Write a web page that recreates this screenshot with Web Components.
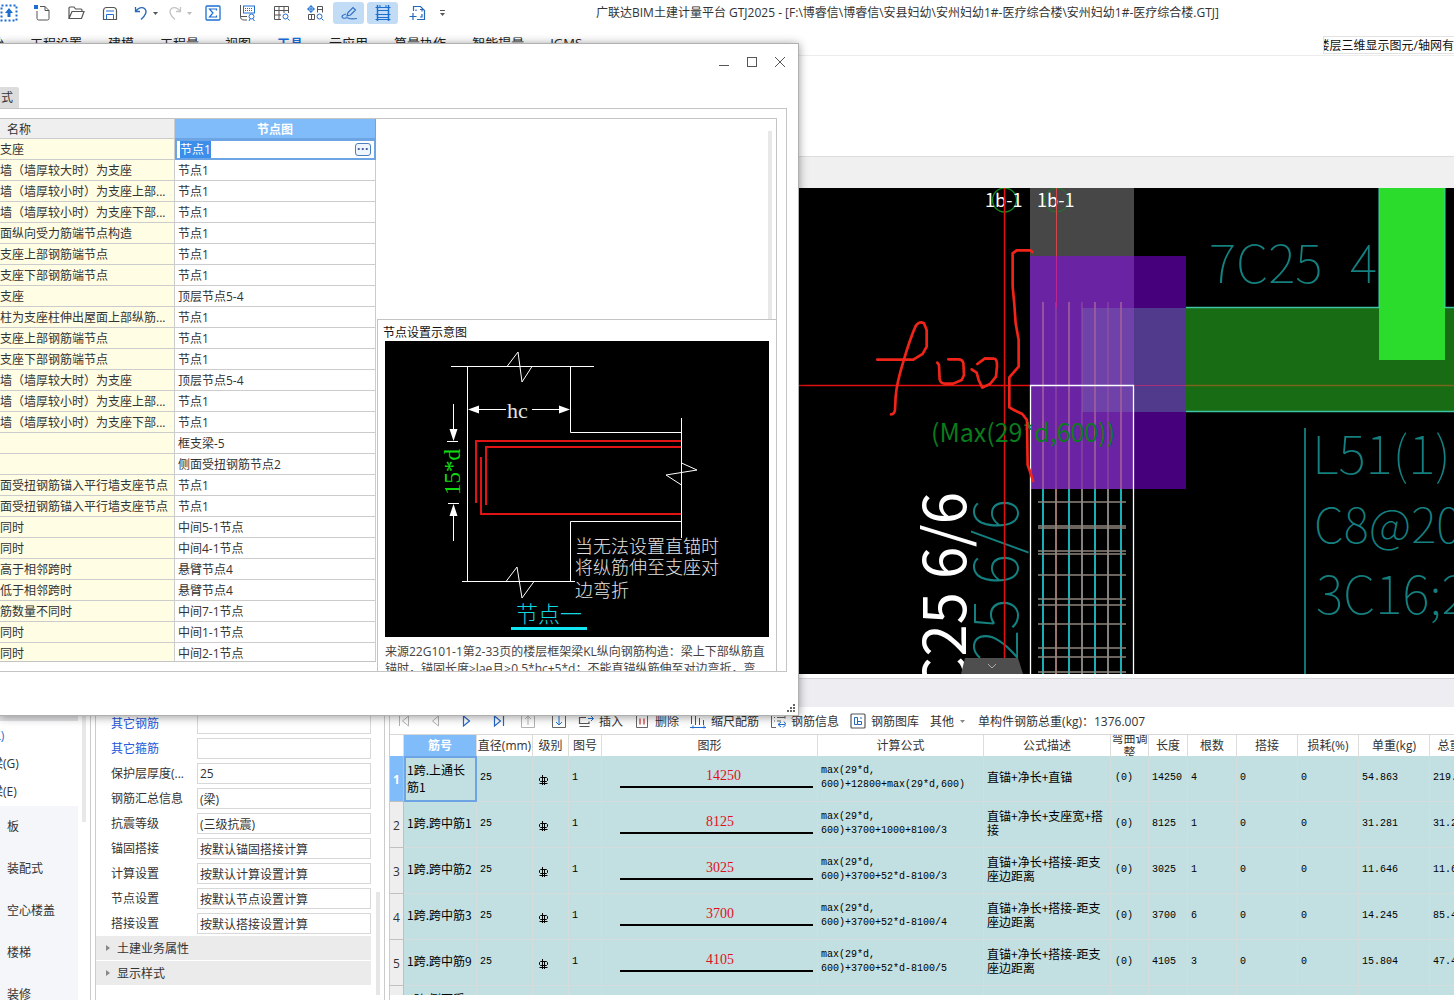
<!DOCTYPE html>
<html lang="zh-CN">
<head>
<meta charset="utf-8">
<title>广联达BIM土建计量平台 GTJ2025</title>
<style>
  html, body {
    height: 100%;
    margin: 0;
    overflow: hidden;
  }
  body {
    background: #fff;
    color: #333;
    font: 12px/17px "Open Sans", "Noto Sans CJK SC", sans-serif;
  }
</style>
</head>
<body>
<app-shell>
  <title-bar slot="top" text="广联达BIM土建计量平台 GTJ2025 - [F:\博睿信\博睿信\安县妇幼\安州妇幼1#-医疗综合楼\安州妇幼1#-医疗综合楼.GTJ]"></title-bar>
  <menu-bar slot="top" active="工具" notice="楼层三维显示图元/轴网有"></menu-bar>
  <cad-view slot="view"></cad-view>
  <component-tree slot="bottom"></component-tree>
  <property-panel slot="bottom"></property-panel>
  <rebar-editor slot="bottom"></rebar-editor>
  <node-dialog slot="window"></node-dialog>
</app-shell>

<script>
const ICONS = {
  upload: '<rect x="1.5" y="1.5" width="15" height="15" stroke="#1c6fd0" stroke-width="2" stroke-dasharray="2 2"/><path d="M9 4l4 5h-2.500v4h-3V9H5z" fill="#1c6fd0"/>',
  fresh: '<path d="M7 2.500h5l4 4v8a1.500 1.500 0 0 1-1.500 1.500h-9A1.500 1.500 0 0 1 4 14.500V7M12 2.500V6.500h4" stroke="#555"/><path d="M1 1h2v2h2v2H3V3H1zM3 1h2v2H3zM1 3h2v2H1z" fill="#1c6fd0"/>',
  open: '<path d="M2 14.500V4a1 1 0 0 1 1-1h4l1.500 2H14a1 1 0 0 1 1 1v1.500M2 14.500L5 7.500h12L14.500 14.500z" stroke="#555" stroke-width="1.200"/>',
  save: '<path d="M2.500 15.500v-9a3 3 0 0 1 3-3h7a3 3 0 0 1 3 3v9z" stroke="#555" stroke-width="1.200"/><path d="M5.500 15.500v-5h7v5M5 7h8" stroke="#1c6fd0"/>',
  undo: '<path d="M2.500 3v4.500H7M2.500 7.500C5 4 9 2.500 11.500 4.500c3 2.500 1.500 6.500-3.500 11" stroke="#2468b8" stroke-width="1.300"/>',
  redo: '<path d="M13.500 3v4.500H9M13.500 7.500C11 4 7 2.500 4.500 4.500c-3 2.500-1.500 6.500 3.500 11" stroke="#c4c4c4" stroke-width="1.300"/>',
  sum: '<rect x="2" y="2" width="14" height="14" rx="1" stroke="#1c6fd0" stroke-width="1.300"/><path d="M12.500 6.500V5h-7L9 9l-3.500 4h7v-1.500" stroke="#1c6fd0" stroke-width="1.200"/>',
  query: '<path d="M2.500 1v11c0 3 1 4 4 4H9M3 12.500h6" stroke="#555"/><rect x="5.500" y="2" width="11" height="7" stroke="#1c6fd0"/><path d="M7 4.500h8M7 6.500h8" stroke="#1c6fd0" stroke-dasharray="1 1"/><circle cx="13.500" cy="12.500" r="2.500" stroke="#1c6fd0"/><path d="M12 15l-1 2M15 15l1.500 2" stroke="#1c6fd0"/>',
  sheet: '<path d="M9 15.500H2.500v-13h14V9M2.500 6.500h14M2.500 11H9M7 2.500v13M12 2.500V9" stroke="#555"/><circle cx="13.500" cy="12.500" r="2.500" stroke="#1c6fd0"/><path d="M15.500 14.500l2 2" stroke="#1c6fd0"/>',
  parts: '<circle cx="5" cy="5" r="2.500" stroke="#1c6fd0"/><path d="M1 5h8M5 1v8" stroke="#1c6fd0"/><path d="M11.500 8.500v-6h5v6M11.500 5.500h5M2.500 10.500h6v5h-6zM5.500 10.500v5" stroke="#555"/><circle cx="13.500" cy="12.500" r="2.500" stroke="#1c6fd0"/><path d="M15.500 14.500l2 2" stroke="#1c6fd0"/>',
  pen: '<path d="M7 12l1-3.500 5-5 2.500 2.500-5 5zM6 10c-4 1-5 2.500-3 4 2 1 3-1 5 0s6 1 9 .5" stroke="#2f6fc4" stroke-width="1.200"/>',
  ladder: '<path d="M3.500 1v16M14.500 1v16" stroke="#1c6fd0" stroke-width="1.500"/><path d="M1.500 3.500h15M3.500 6.500h11M1.500 10.500h15M3.500 13.500h11M1.500 15.500h15M6 1v3M12 1v3" stroke="#1c6fd0"/>',
  frame: '<path d="M5.500 7V2.500h7l4 4v9H9M12 5.500h2v2M8 5.500V7M14 10v3h-2" stroke="#2468b8" stroke-width="1.200"/><path d="M5 9v7M1.500 12.500h7" stroke="#2468b8" stroke-width="1.200"/>',
  first: '<path d="M4.500 4v10M13.500 4v10L7.500 9z" stroke="#b4b4b4"/>',
  prev: '<path d="M12.500 4v10L6.500 9z" stroke="#b4b4b4"/>',
  next: '<path d="M6.500 4v10L12.500 9z" stroke="#2468c8" stroke-width="1.200"/>',
  last: '<path d="M15.500 4v10M6.500 4v10l6-5z" stroke="#2468c8" stroke-width="1.200"/>',
  up: '<path d="M6 2.500H2.500v13h13v-13H12M9 13V4M6 7l3-3 3 3" stroke="#b4b4b4"/>',
  down: '<path d="M6 2.500H2.500v13h13v-13H12" stroke="#666"/><path d="M9 3v10M6 10l3 3 3-3" stroke="#1c6fd0"/>',
  insert: '<path d="M9 5.500H2.500v6H12V9.500M2.500 14.500h10" stroke="#555" stroke-width="1.200"/><path d="M11 6.500h5M14 4l2.500 2.500L14 9" stroke="#1c6fd0"/>',
  remove: '<path d="M2 3.500h14M3.500 3.500v12h11v-12" stroke="#666"/><path d="M7 6.500v6M11 6.500v6" stroke="#d04040" stroke-width="1.300"/>',
  scale: '<path d="M2.500 3v9M6.500 4v9M10.500 6v7M14.500 8v5" stroke="#555"/><path d="M1 15.500h16M4 13.500v3M15 13.500v3" stroke="#1c6fd0"/>',
  info: '<path d="M5 2.500H2.500v13H7M5 5.500h1M8 5.500h8M5 9h1M8 9h4M14 2.500h2v4" stroke="#666"/><path d="M9 12.500h7M12 10l-3 2.500 3 2.500M15 9.500l2 3-3 3" stroke="#1c6fd0"/>',
  library: '<rect x="2" y="2" width="14" height="14" rx="1" stroke="#555" stroke-width="1.200"/><path d="M5.500 5.500h3v7h-3zM8.500 9.500h4v3h-4M11 6h2" stroke="#2468b8"/>',
};

// 18px icons use the full grid, 16px ones drop its outer pixel
function icon(name, size = 18) {
  const inset = (18 - size) / 2;
  return `<svg width="${size}" height="${size}" viewBox="${inset} ${inset} ${size} ${size}" fill="none">${ICONS[name]}</svg>`;
}

class AppShell extends HTMLElement {
  constructor() {
    super();
    this.attachShadow({ mode: "open" });
    this.shadowRoot.innerHTML = /*html*/ `
      <style>
        :host {
          display: flex;
          flex-direction: column;
          position: relative;
          height: 100vh;
          overflow: hidden;
        }
        .ribbon { flex: none; height: 100px; }
        .strip {
          flex: none;
          box-sizing: border-box;
          height: 32px;
          background: #f0f0f0;
          border-top: 1px solid #ddd;
        }
        .view {
          display: flex;
          flex: 1;
          min-height: 0;
        }
        .divider {
          flex: none;
          box-sizing: border-box;
          height: 29px;
          margin-top: 4px;
          background: #eeeef2;
          border-top: 1px solid #d4d4d8;
        }
        .bottom {
          display: flex;
          flex: none;
          height: 293px;
        }
      </style>
      <slot name="top"></slot>
      <div class="ribbon"></div>
      <div class="strip"></div>
      <div class="view"><slot name="view"></slot></div>
      <div class="divider"></div>
      <div class="bottom"><slot name="bottom"></slot></div>
      <slot name="window"></slot>
    `;
  }
}
customElements.define("app-shell", AppShell);

class TitleBar extends HTMLElement {
  constructor() {
    super();
    this.attachShadow({ mode: "open" });
  }

  connectedCallback() {
    this.shadowRoot.innerHTML = /*html*/ `
      <style>
        :host {
          display: flex;
          flex: none;
          height: 26px;
          white-space: nowrap;
        }
        .tools {
          display: flex;
          flex: none;
          align-items: center;
          gap: 3px;
          width: 596px;
        }
        button {
          display: grid;
          flex: none;
          place-content: center;
          width: 31px;
          height: 22px;
          padding: 0;
          border: 0;
          border-radius: 3px;
          background: none;
        }
        button.first { width: 24px; margin: 0 2px 0 -3px; }
        button.undo { margin-left: -2px; }
        button.caret { width: 9px; margin: 0 -3px 0 -9px; }
        button.caret.wide { margin-right: 0; }
        button.caret.more { margin: 0 0 0 3px; }
        button.on { background: #c2dcf5; }
        svg { display: block; }
        h1 {
          margin: 0;
          font-size: 12px;
          font-weight: normal;
          line-height: 26px;
        }
      </style>
      <div class="tools">
        <button class="first" aria-label="上传">${icon("upload")}</button>
        <button aria-label="新建">${icon("fresh")}</button>
        <button aria-label="打开">${icon("open")}</button>
        <button aria-label="保存">${icon("save")}</button>
        <button class="undo" aria-label="撤销">${icon("undo")}</button>
        <button class="caret" aria-label="撤销列表"><svg width="5" height="3"><path d="M0 0h5L2.500 3z" fill="#555"/></svg></button>
        <button aria-label="恢复">${icon("redo")}</button>
        <button class="caret wide" aria-label="恢复列表"><svg width="5" height="3"><path d="M0 0h5L2.500 3z" fill="#bbb"/></svg></button>
        <button aria-label="汇总计算">${icon("sum")}</button>
        <button aria-label="查看工程量">${icon("query")}</button>
        <button aria-label="查看报表">${icon("sheet")}</button>
        <button aria-label="查看构件">${icon("parts")}</button>
        <button class="on" aria-label="编辑钢筋">${icon("pen")}</button>
        <button class="on" aria-label="钢筋三维">${icon("ladder")}</button>
        <button aria-label="选择框">${icon("frame")}</button>
        <button class="caret more" aria-label="更多"><svg width="5" height="6"><path d="M0 .5h5" stroke="#555"/><path d="M0 3h5L2.500 6z" fill="#555"/></svg></button>
      </div>
      <h1></h1>
    `;
    this.shadowRoot.querySelector("h1").textContent = this.getAttribute("text");
  }
}
customElements.define("title-bar", TitleBar);

class MenuBar extends HTMLElement {
  items = ["始", "工程设置", "建模", "工程量", "视图", "工具", "云应用", "算量协作", "智能提量", "IGMS"];

  constructor() {
    super();
    this.attachShadow({ mode: "open" });
  }

  connectedCallback() {
    const active = this.getAttribute("active");
    this.shadowRoot.innerHTML = /*html*/ `
      <style>
        :host {
          display: flex;
          flex: none;
          justify-content: space-between;
          box-sizing: border-box;
          height: 30px;
          padding-top: 7px;
          border-bottom: 1px solid #ececec;
          overflow: hidden;
        }
        nav {
          display: flex;
          gap: 26px;
          margin-left: -9px;
        }
        a {
          color: #222;
          font-size: 13px;
          line-height: 20px;
          text-decoration: none;
          white-space: nowrap;
        }
        a.active { color: #1a6fe0; font-weight: bold; }
        .notice {
          display: flex;
          justify-content: flex-end;
          box-sizing: border-box;
          width: 131px;
          height: 18px;
          margin-top: 3px;
          border: 1px solid #e2e2e2;
          border-right: 0;
          color: #111;
          line-height: 17px;
          white-space: nowrap;
          overflow: hidden;
        }
      </style>
      <nav>${this.items.map((item) => `<a href="#"${item === active ? ' class="active"' : ""}>${item}</a>`).join("")}</nav>
      <div class="notice"><span>${this.getAttribute("notice")}</span></div>
    `;
  }
}
customElements.define("menu-bar", MenuBar);

class CadView extends HTMLElement {
  bars = [
    [1043, "#18b0b8"], [1056, "#9a7468"], [1069, "#18b0b8"], [1082, "#84807c"],
    [1095, "#18b0b8"], [1108, "#84807c"], [1121, "#18b0b8"],
  ];
  stirrups = [502, 526, 528, 551, 554, 575, 599, 605, 624, 648, 657, 672];

  constructor() {
    super();
    this.attachShadow({ mode: "open" });
  }

  connectedCallback() {
    const bars = this.bars.map(([x, color]) => `
      <path d="M${x} 489V674" stroke="${color}" stroke-width="2"/>
      <path d="M${x} 302V489" stroke="#a8629c" stroke-width="1.500" opacity="${color === "#18b0b8" ? 1 : 0.5}"/>`).join("");
    const stirrups = this.stirrups.map((y) => `<path d="M1038 ${y}H1126"/>`).join("");

    this.shadowRoot.innerHTML = /*html*/ `
      <style>
        :host {
          display: block;
          flex: 1;
          min-width: 0;
          background: #000;
          overflow: hidden;
        }
        svg { display: block; width: 100%; height: 100%; }
        text { font-family: "Noto Sans CJK SC", sans-serif; white-space: pre; }
        .cad {
          fill: #158080;
          font-size: 52px;
          font-weight: 100;
        }
        .cad.dense { font-size: 48px; }
        .cad.tall { font-size: 60px; }
        .axis { fill: #fff; font-size: 18px; }
      </style>
      <svg fill="none">
        <g transform="translate(0 -188)">
          <path d="M1186 308h2400v104H1186z" fill="#186c14"/>
          <path d="M1186 307.500H2400M1186 411.500H2400" stroke="#3cc4a4" stroke-width="1.500"/>
          <path d="M1379 188h66v172h-66z" fill="#2cdc2c"/>
          <path d="M1379 188V308M1445 188V308" stroke="#3cd4b4"/>

          <path d="M1030 188h104v68h-104z" fill="#474747"/>
          <path d="M1030 256h156v233h-156z" fill="#46007b"/>
          <path d="M1030 256h104v233h-104z" fill="#6a24a3"/>
          <path d="M1082 308h104v104h-104z" fill="#513a8b"/>
          <path d="M1082 308h52v104h-52z" fill="#6e42a9"/>

          <text class="cad" x="1209" y="283">7C25</text>
          <text class="cad" x="1350" y="283">4</text>
          <text class="cad" x="1312" y="474">L51(1)</text>
          <text class="cad dense" x="1314" y="543">C8@20</text>
          <text class="cad" x="1316" y="614">3C16;2</text>
          <path d="M1305 428V2000" stroke="#0f7474" stroke-width="2"/>
          <text class="cad tall" text-anchor="end" transform="translate(1018 499) rotate(-90)">25 6/6</text>

          ${bars}
          <g stroke="#8f857c" stroke-width="1.300">${stirrups}</g>

          <circle cx="1004.500" cy="200" r="12" stroke="#128a1c" stroke-width="1.300"/>
          <circle cx="1056.500" cy="200" r="12" stroke="#1e7a26"/>
          <text class="axis" x="985" y="207">1b-1</text>
          <text class="axis" x="1037" y="207">1b-1</text>
          <path d="M1004.500 188V674" stroke="#e01010" stroke-width="1.500"/>
          <path d="M1056.500 188V256" stroke="#d04848"/>
          <path d="M1056.500 256V308" stroke="#b82890"/>
          <path d="M798 385.500H1030" stroke="#e01010" stroke-width="1.500"/>
          <path d="M1134 385.500H1186" stroke="#a83078"/>
          <path d="M1186 385.500H2400" stroke="#78641a" stroke-width="1.500"/>
          <path d="M1030.500 674V385.500H1133.500V674" stroke="#fff" stroke-width="1.300"/>

          <text x="931" y="442" font-size="25" fill="#0a7c1c">(Max(29*d,600))</text>
          <text font-size="58" fill="#fff" text-anchor="end" transform="translate(966 492) rotate(-90)">C25 6/6</text>

          <g transform="translate(790 180) scale(.3333)" stroke="#f02418" stroke-width="8" stroke-linecap="round" stroke-linejoin="round">
            <path d="M727 216L722 211H680L668 220V320L673 372L677 430L686 480V560L658 592V682L672 690L697 702L711 720L713 855L722 880L729 903"/>
            <path d="M262 539H370L398 522L410 500V450L402 430Q390 422 378 436Q362 470 340 545Q320 610 317 650L315 690Q312 704 303 703"/>
            <path d="M442 548L447 555L449 598Q452 611 464 611H490L515 600L522 585L520 548Q516 538 506 538H475"/>
            <path d="M545 568L560 578L566 600L577 623L600 612L618 590L621 560Q622 536 612 536L585 535L562 552"/>
          </g>

          <path d="M961 674L965 658H1018L1023 674z" fill="#4e4e4e"/>
          <path d="M988 664l4 4 4-4" stroke="#aaa"/>
        </g>
      </svg>
    `;
  }
}
customElements.define("cad-view", CadView);

class ComponentTree extends HTMLElement {
  constructor() {
    super();
    this.attachShadow({ mode: "open" });
    this.shadowRoot.innerHTML = /*html*/ `
      <style>
        :host {
          display: flex;
          flex: none;
          gap: 4px;
          box-sizing: border-box;
          width: 91px;
          border-right: 1px solid #ccc;
          overflow: hidden;
        }
        .list { width: 78px; white-space: nowrap; }
        .head { height: 14px; background: #e4e4e8; }
        ul { margin: 0; padding: 0; list-style: none; }
        .types { padding-top: 1px; }
        .types li { line-height: 28px; }
        .types span { margin-left: -9px; }
        .types .active { color: #2a6fd0; }
        .groups { background: #f4f6f9; }
        .groups li { padding-left: 7px; line-height: 42px; }
        .thumb { width: 4px; height: 115px; background: #e8e8e8; }
      </style>
      <div class="list">
        <div class="head"></div>
        <ul class="types">
          <li class="active"><span>(L)</span></li>
          <li><span>梁(G)</span></li>
          <li><span>梁(E)</span></li>
        </ul>
        <ul class="groups">
          <li>板</li>
          <li>装配式</li>
          <li>空心楼盖</li>
          <li>楼梯</li>
          <li>装修</li>
        </ul>
      </div>
      <div class="thumb"></div>
    `;
  }
}
customElements.define("component-tree", ComponentTree);

class PropertyPanel extends HTMLElement {
  rows = [
    ["其它钢筋", "", true],
    ["其它箍筋", "", true],
    ["保护层厚度(...", "25"],
    ["钢筋汇总信息", "(梁)"],
    ["抗震等级", "(三级抗震)"],
    ["锚固搭接", "按默认锚固搭接计算"],
    ["计算设置", "按默认计算设置计算"],
    ["节点设置", "按默认节点设置计算"],
    ["搭接设置", "按默认搭接设置计算"],
  ];

  constructor() {
    super();
    this.attachShadow({ mode: "open" });
  }

  connectedCallback() {
    const rows = this.rows.map(([label, value, link], i) => `
      <label for="p${i}"${link ? ' class="link"' : ""}>${label}</label>
      <input id="p${i}" value="${value}">`).join("");

    this.shadowRoot.innerHTML = /*html*/ `
      <style>
        :host {
          display: flex;
          flex: none;
          gap: 5px;
          box-sizing: border-box;
          width: 290px;
          margin-left: 4px;
          border: 1px solid #ccc;
          border-width: 0 1px;
          overflow: hidden;
        }
        .body { flex: none; width: 275px; }
        .rows {
          display: grid;
          grid-template-columns: 86px 174px;
          gap: 4px 0;
          padding: 6px 0 2px 15px;
        }
        label { line-height: 21px; white-space: nowrap; }
        label.link { color: #2856d8; }
        input {
          box-sizing: border-box;
          height: 21px;
          padding: 0 2px;
          border: 1px solid #d8d8d8;
          background: #fff;
          color: #333;
          font: inherit;
        }
        button {
          display: flex;
          align-items: center;
          gap: 7px;
          width: 100%;
          height: 24px;
          margin-bottom: 1px;
          padding: 0 0 0 10px;
          border: 0;
          background: #ebebeb;
          color: #333;
          font: inherit;
        }
        .thumb {
          align-self: flex-end;
          width: 4px;
          height: 103px;
          margin-bottom: 5px;
          background: #e6e6e6;
        }
      </style>
      <div class="body">
        <div class="rows">${rows}</div>
        <button><svg width="4" height="6"><path d="M0 0l4 3-4 3z" fill="#888"/></svg>土建业务属性</button>
        <button><svg width="4" height="6"><path d="M0 0l4 3-4 3z" fill="#888"/></svg>显示样式</button>
      </div>
      <div class="thumb"></div>
    `;
  }
}
customElements.define("property-panel", PropertyPanel);

class RebarEditor extends HTMLElement {
  columns = [
    ["", 14], ["筋号", 73], ["直径(mm)", 56], ["级别", 36], ["图号", 33], ["图形", 216],
    ["计算公式", 166], ["公式描述", 127], ["弯曲调整", 38], ["长度", 39], ["根数", 49],
    ["搭接", 61], ["损耗(%)", 61], ["单重(kg)", 71], ["总重(kg)", 60],
  ];
  rows = [
    ["1跨.上通长筋1", "14250", "600)+12800+max(29*d,600)", "直锚+净长+直锚", "4", "54.863", "219.452"],
    ["1跨.跨中筋1", "8125", "600)+3700+1000+8100/3", "直锚+净长+支座宽+搭接", "1", "31.281", "31.281"],
    ["1跨.跨中筋2", "3025", "600)+3700+52*d-8100/3", "直锚+净长+搭接-距支座边距离", "1", "11.646", "11.646"],
    ["1跨.跨中筋3", "3700", "600)+3700+52*d-8100/4", "直锚+净长+搭接-距支座边距离", "6", "14.245", "85.47"],
    ["1跨.跨中筋9", "4105", "600)+3700+52*d-8100/5", "直锚+净长+搭接-距支座边距离", "3", "15.804", "47.412"],
  ];

  constructor() {
    super();
    this.attachShadow({ mode: "open" });
  }

  connectedCallback() {
    this.render();
  }

  renderRow([name, length, formula, note, count, unit, total], i) {
    return `
      <tr${i === 0 ? ' class="current"' : ""}>
        <th>${i + 1}</th>
        <td class="name">${name}</td>
        <td>25</td>
        <td><svg width="10" height="10" viewBox="0 0 10 10" fill="none" stroke="#000"><path d="M4.500 0v10M6.500 2v8M1.500 3.500l1-1h6l1 1v2l-1 1h-6l-1-1zM1.500 8.500h8"/></svg></td>
        <td>1</td>
        <td class="shape"><b>${length}</b></td>
        <td>max(29*d,<br>${formula}</td>
        <td class="note">${note}</td>
        <td>(0)</td>
        <td>${length}</td>
        <td>${count}</td>
        <td>0</td>
        <td>0</td>
        <td>${unit}</td>
        <td>${total}</td>
      </tr>`;
  }

  render() {
    this.shadowRoot.innerHTML = /*html*/ `
      <style>
        :host {
          display: flex;
          flex: 1;
          flex-direction: column;
          box-sizing: border-box;
          min-width: 0;
          margin-left: 4px;
          padding-bottom: 5px;
          border-left: 1px solid #ccc;
          overflow: hidden;
        }
        .tools {
          display: flex;
          flex: none;
          align-items: center;
          gap: 11px;
          box-sizing: border-box;
          height: 28px;
          padding: 1px 0 0 6px;
          border-bottom: 1px solid #d8d8d8;
          white-space: nowrap;
        }
        .steps { display: flex; gap: 15px; }
        button {
          display: flex;
          align-items: center;
          gap: 5px;
          padding: 0;
          border: 0;
          background: none;
          color: #333;
          font: inherit;
        }
        .scroll { flex: 1; min-height: 0; overflow: hidden; }
        table {
          width: 1100px;
          border-collapse: separate;
          border-spacing: 0;
          table-layout: fixed;
        }
        th, td {
          box-sizing: border-box;
          padding: 0 0 0 3px;
          border-right: 1px solid #d4dcdc;
          text-align: left;
        }
        thead th {
          padding: 0;
          border-color: #ddd;
          font-weight: normal;
          text-align: center;
        }
        thead div {
          display: flex;
          align-items: center;
          justify-content: center;
          height: 21px;
          line-height: 14px;
          overflow: hidden;
        }
        thead th:nth-child(2) { background: #80bbfa; color: #fff; font-weight: bold; }
        tbody tr { height: 46px; background: #c2dfe1; }
        tbody td {
          padding-bottom: 1px;
          border-bottom: 1px solid #d4dcdc;
          color: #000;
          font: 10px/14px "Liberation Mono", "Noto Sans CJK SC", monospace;
        }
        tbody th {
          padding: 2px 0 0 3px;
          border-right: 1px solid #c0c0c0;
          border-bottom: 1px solid #c0c0c0;
          background: #eee;
          font-weight: normal;
        }
        td.name {
          padding-bottom: 4px;
          font: 12px/17px "Noto Sans CJK SC", sans-serif;
          white-space: nowrap;
        }
        td.note {
          padding: 0 0 3px 3px;
          font: 12px/14px "Noto Sans CJK SC", sans-serif;
        }
        td:nth-child(9) { padding-left: 4px; }
        .current th { background: #80bbfa; color: #fff; font-weight: bold; }
        .current td.name {
          padding: 0 0 3px 1px;
          border: 2px solid #6ca4e4;
          white-space: normal;
        }
        td svg { display: block; margin: 3px 0 0 2px; }
        td.shape { padding-left: 18px; }
        .shape b {
          display: block;
          width: 107px;
          padding: 0 0 2px 86px;
          border-bottom: 2px solid #000;
          color: #e0101c;
          font: 14px/16px "Liberation Serif", serif;
        }
      </style>
      <div class="tools">
        <div class="steps">
          ${["first", "prev", "next", "last", "up", "down"].map((name) => `<button aria-label="${name}">${icon(name, 16)}</button>`).join("")}
        </div>
        <button>${icon("insert", 16)}插入</button>
        <button>${icon("remove", 16)}删除</button>
        <button>${icon("scale", 16)}缩尺配筋</button>
        <button>${icon("info", 16)}钢筋信息</button>
        <button>${icon("library", 16)}钢筋图库</button>
        <button>其他<svg width="8" height="3"><path d="M1 0h5L3.500 3z" fill="#888"/></svg></button>
        <span>单构件钢筋总重(kg)：1376.007</span>
      </div>
      <div class="scroll">
        <table>
          <colgroup>${this.columns.map(([, width]) => `<col style="width: ${width}px">`).join("")}</colgroup>
          <thead><tr>${this.columns.map(([title]) => `<th><div>${title}</div></th>`).join("")}</tr></thead>
          <tbody>
            ${this.rows.map((row, i) => this.renderRow(row, i)).join("")}
            <tr><th></th><td class="name">1跨.侧面受<br>扭筋1</td>${"<td></td>".repeat(4)}<td>max(29*d,<br>600)</td>${"<td></td>".repeat(8)}</tr>
          </tbody>
        </table>
      </div>
    `;
  }
}
customElements.define("rebar-editor", RebarEditor);

class NodePreview extends HTMLElement {
  constructor() {
    super();
    this.attachShadow({ mode: "open" });
    this.shadowRoot.innerHTML = /*html*/ `
      <style>
        :host {
          display: block;
          flex: none;
          box-sizing: border-box;
          height: 352px;
          padding: 4px 6px 0 7px;
          border: 1px solid #c4c4c4;
          border-width: 1px 0 0 1px;
          overflow: hidden;
        }
        h2 {
          margin: 0 0 0 -2px;
          color: #111;
          font-size: 12px;
          font-weight: normal;
          line-height: 17px;
        }
        svg { display: block; background: #000; }
        p {
          margin: 6px 0 0;
          color: #444;
          line-height: 17px;
          white-space: nowrap;
        }
        .cjk { font: 300 18px "Noto Sans CJK SC", sans-serif; }
        .serif { font-family: "Liberation Serif", serif; }
      </style>
      <h2>节点设置示意图</h2>
      <svg width="384" height="296" fill="none" stroke="#fff">
        <path d="M66 25.500H122L133 11L137 41L147 25.500H209M122 25.500H147M82.500 25V241M185.500 25V91.500H296.500M296.500 77V122L312 129L281 134L296.500 144V197M296.500 122V144"/>
        <path d="M77 240.500H121L132 226L137 257L149 240.500H190M121 240.500H149M185.500 241V180.500H296.500"/>
        <path d="M90 68.500H121M147 68.500H178M62 100.500H73M68.500 63V90M63 162.500H74M68.500 172V200"/>
        <g fill="#fff" stroke="none">
          <path d="M83 68.500l11-4v8zM185 68.500l-11-4v8zM68.500 100l-4-12h8zM68.500 163l-4 12h8z"/>
        </g>
        <path d="M91 162V100H296M101 164V106H296M96 116V173H296" stroke="#e01414" stroke-width="2"/>
        <path d="M126 287.500H202" stroke="#12e6f0" stroke-width="3"/>
        <g stroke="none" fill="#e4e4e4">
          <text class="serif" x="122" y="77" font-size="22">hc</text>
          <text class="serif" font-size="23" fill="#12d812" transform="translate(75 154) rotate(-90)">15*d</text>
          <text class="cjk" x="190" y="212">当无法设置直锚时</text>
          <text class="cjk" x="190" y="233">将纵筋伸至支座对</text>
          <text class="cjk" x="190" y="256">边弯折</text>
          <text class="cjk" x="131" y="281" style="font-size: 22px" fill="#12d8e0">节点一</text>
        </g>
      </svg>
      <p>来源22G101-1第2-33页的楼层框架梁KL纵向钢筋构造：梁上下部纵筋直<br>锚时，锚固长度≥lae且≥0.5*hc+5*d；不能直锚纵筋伸至对边弯折，弯</p>
    `;
  }
}
customElements.define("node-preview", NodePreview);

class NodeDialog extends HTMLElement {
  nodes = [
    ["支座", "节点1"],
    ["墙（墙厚较大时）为支座", "节点1"],
    ["墙（墙厚较小时）为支座上部...", "节点1"],
    ["墙（墙厚较小时）为支座下部...", "节点1"],
    ["面纵向受力筋端节点构造", "节点1"],
    ["支座上部钢筋端节点", "节点1"],
    ["支座下部钢筋端节点", "节点1"],
    ["支座", "顶层节点5-4"],
    ["柱为支座柱伸出屋面上部纵筋...", "节点1"],
    ["支座上部钢筋端节点", "节点1"],
    ["支座下部钢筋端节点", "节点1"],
    ["墙（墙厚较大时）为支座", "顶层节点5-4"],
    ["墙（墙厚较小时）为支座上部...", "节点1"],
    ["墙（墙厚较小时）为支座下部...", "节点1"],
    ["", "框支梁-5"],
    ["", "侧面受扭钢筋节点2"],
    ["面受扭钢筋锚入平行墙支座节点", "节点1"],
    ["面受扭钢筋锚入平行墙支座节点", "节点1"],
    ["同时", "中间5-1节点"],
    ["同时", "中间4-1节点"],
    ["高于相邻跨时", "悬臂节点4"],
    ["低于相邻跨时", "悬臂节点4"],
    ["筋数量不同时", "中间7-1节点"],
    ["同时", "中间1-1节点"],
    ["同时", "中间2-1节点"],
  ];

  constructor() {
    super();
    this.attachShadow({ mode: "open" });
  }

  connectedCallback() {
    this.render();
    this.shadowRoot.querySelector("input").select();
  }

  renderRow([name, node], i) {
    const cell = i === 0
      ? `<td class="edit"><div><input aria-label="节点图" value="${node}"><button aria-label="选择节点">···</button></div></td>`
      : `<td>${node}</td>`;
    return `<tr><td class="name">${name}</td>${cell}</tr>`;
  }

  render() {
    this.shadowRoot.innerHTML = /*html*/ `
      <style>
        :host {
          display: block;
          position: absolute;
          left: 0;
          top: 43px;
          box-sizing: border-box;
          width: 799px;
          height: 673px;
          background: #fff;
          border: 1px solid #b0b0b0;
          border-left: 0;
          box-shadow: 0 1px 9px rgba(0, 0, 0, .4);
        }
        header {
          display: flex;
          justify-content: flex-end;
          height: 36px;
          padding-right: 4px;
        }
        header button {
          display: grid;
          place-content: center;
          width: 28px;
          padding: 0;
          border: 0;
          background: none;
        }
        .tab {
          display: block;
          width: 19px;
          height: 21px;
          margin-top: 7px;
          padding: 0 0 0 1px;
          border: 0;
          border-radius: 0 2px 0 0;
          background: #dcdcdc;
          color: #333;
          font: inherit;
          text-align: left;
        }
        .frame {
          box-sizing: border-box;
          width: 787px;
          height: 564px;
          padding: 9px 9px 0 0;
          border: 1px solid #c4c4c4;
          border-left: 0;
        }
        .inner {
          display: flex;
          box-sizing: border-box;
          height: 100%;
          border: 1px solid #c4c4c4;
          border-width: 1px 1px 0 0;
        }
        .grid {
          flex: none;
          box-sizing: border-box;
          width: 376px;
          height: 543px;
          border-bottom: 1px solid #c4c4c4;
          overflow: hidden;
        }
        table {
          width: 376px;
          border-collapse: separate;
          border-spacing: 0;
          table-layout: fixed;
        }
        th, td {
          box-sizing: border-box;
          height: 21px;
          padding: 0 0 0 3px;
          border: 1px solid #ccc;
          border-width: 0 1px 1px 0;
          text-align: left;
          white-space: nowrap;
          overflow: hidden;
        }
        th { height: 20px; padding: 1px 0 0 7px; background: #efefef; font-weight: normal; }
        th + th {
          padding: 1px 0 0;
          background: #80bbfa;
          border-color: #6ca4e4;
          color: #fff;
          font-weight: bold;
          text-align: center;
        }
        td.name { padding-left: 0; background: #fffde3; }
        td.edit { padding: 0; border: 0; }
        .edit div {
          display: flex;
          align-items: center;
          box-sizing: border-box;
          height: 21px;
          padding: 0 3px;
          border: 2px solid #6ca4e4;
        }
        input {
          flex: 1;
          min-width: 0;
          height: 17px;
          padding: 0;
          border: 0;
          outline: 0;
          font: inherit;
        }
        input::selection { background: #3b8eea; color: #fff; }
        .edit button {
          box-sizing: border-box;
          width: 16px;
          height: 13px;
          padding: 0;
          border: 1px solid #4a7fc0;
          border-radius: 3px;
          background: #eef5fd;
          color: #2a5a9a;
          font: bold 12px/9px "Liberation Sans", sans-serif;
        }
        aside {
          display: flex;
          flex: 1;
          flex-direction: column;
          justify-content: space-between;
          align-items: stretch;
          margin-left: 1px;
          min-width: 0;
        }
        .thumb {
          align-self: flex-end;
          width: 4px;
          height: 188px;
          margin: 12px 4px 0 0;
          background: #e8e8e8;
        }
        footer {
          display: flex;
          justify-content: flex-end;
          padding: 32px 2px 0 0;
        }
        svg { display: block; }
      </style>
      <header>
        <button aria-label="最小化"><svg width="12" height="12"><path d="M1 9.500h10" stroke="#555"/></svg></button>
        <button aria-label="最大化"><svg width="12" height="12" fill="none"><rect x="1.500" y="1.500" width="9" height="9" stroke="#555"/></svg></button>
        <button aria-label="关闭"><svg width="12" height="12"><path d="M1 1l10 10M11 1L1 11" stroke="#555"/></svg></button>
      </header>
      <button class="tab">式</button>
      <div class="frame">
        <div class="inner">
          <div class="grid">
            <table>
              <colgroup><col style="width: 175px"><col></colgroup>
              <thead><tr><th>名称</th><th>节点图</th></tr></thead>
              <tbody>${this.nodes.map((row, i) => this.renderRow(row, i)).join("")}</tbody>
            </table>
          </div>
          <aside>
            <div class="thumb"></div>
            <node-preview></node-preview>
          </aside>
        </div>
      </div>
      <footer><svg width="9" height="8" fill="#666"><path d="M6 0h2v2H6zM3 3h2v2H3zM6 3h2v2H6zM0 6h2v2H0zM3 6h2v2H3zM6 6h2v2H6z"/></svg></footer>
    `;
  }
}
customElements.define("node-dialog", NodeDialog);
</script>
</body>
</html>
